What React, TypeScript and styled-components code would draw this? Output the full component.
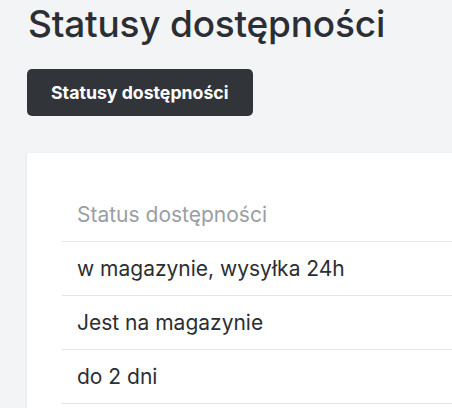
import styled, { createGlobalStyle } from "styled-components";

const GlobalStyle = createGlobalStyle`
  html, body {
    margin: 0;
    padding: 0;
    background: #f3f4f6;
    font-family: Inter, "Noto Sans", sans-serif;
    color: #2b2f33;
  }
`;

const statuses = ["w magazynie, wysyłka 24h", "Jest na magazynie", "do 2 dni"];

const App = () => {
  return (
    <>
      <GlobalStyle />
      <Page>
        <Title>Statusy dostępności</Title>
        <DarkButton>Statusy dostępności</DarkButton>
        <Card>
          <Table>
            <thead>
              <tr>
                <HeadCell>Status dostępności</HeadCell>
              </tr>
            </thead>
            <tbody>
              {statuses.map((s) => (
                <tr key={s}>
                  <Cell>{s}</Cell>
                </tr>
              ))}
            </tbody>
          </Table>
        </Card>
      </Page>
    </>
  );
};

const Page = styled.div`
  padding: 2px 0 0 27px;
  display: flex;
  flex-direction: column;
  align-items: flex-start;
  overflow: hidden;
  height: 406px;

  & > * {
    flex-shrink: 0;
  }
`;

const Title = styled.h1`
  margin: 0 0 23px 1px;
  font-size: 37px;
  line-height: 44px;
  font-weight: 500;
  letter-spacing: -0.2px;
  color: #2b2f33;
`;

const DarkButton = styled.button`
  height: 47px;
  border: none;
  border-radius: 5px;
  background: #31353a;
  color: #ffffff;
  font-family: Inter, "Noto Sans", sans-serif;
  font-size: 17.7px;
  font-weight: 700;
  white-space: nowrap;
  padding: 0 24px;
  margin-bottom: 37px;
`;

const Card = styled.div`
  background: #ffffff;
  width: 460px;
  padding: 35px;
  box-shadow: -1px 0 2px rgba(0, 0, 0, 0.05);
`;

const Table = styled.table`
  width: 100%;
  border-collapse: collapse;
`;

const HeadCell = styled.th`
  text-align: left;
  font-weight: 400;
  font-size: 21px;
  color: #9a9ea3;
  height: 53px;
  padding: 0 15px;
  border-bottom: 1px solid #e3e5e8;
`;

const Cell = styled.td`
  font-size: 21px;
  color: #2b2f33;
  height: 53px;
  padding: 0 15px;
  border-bottom: 1px solid #e3e5e8;
`;

export default App;
